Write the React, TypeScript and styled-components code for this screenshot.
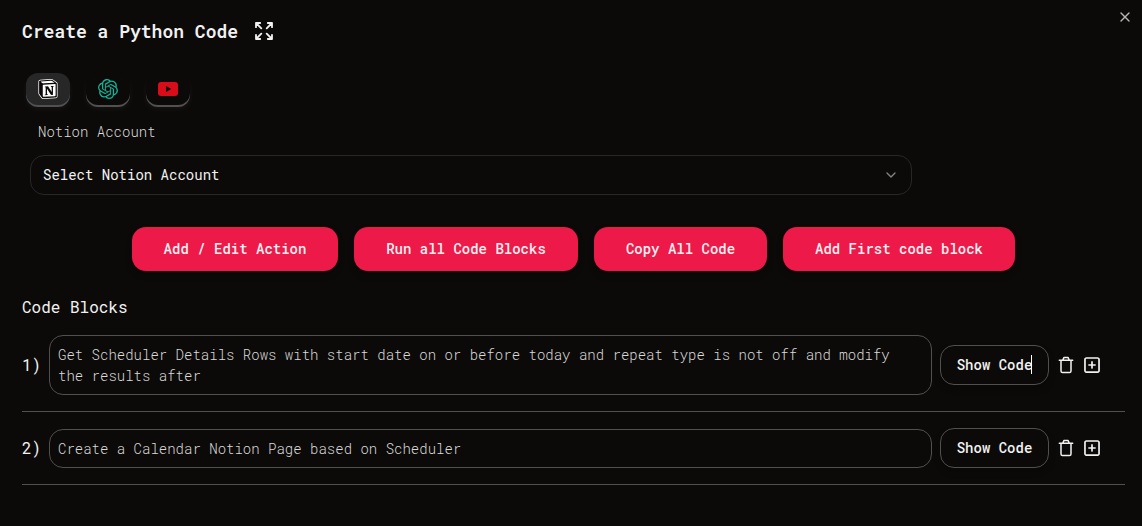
import React from "react";
import styled, { createGlobalStyle } from "styled-components";
import { ChevronDown, X } from "lucide-react";
import { FaRegSquarePlus } from "react-icons/fa6";
import { SiOpenai } from "react-icons/si";

const Global = createGlobalStyle`
  *, *::before, *::after { box-sizing: border-box; }
  body { margin: 0; background: #0c0a09; }
  button { font: inherit; color: inherit; margin: 0; }
`;

const Dialog = styled.main`
  width: 1142px;
  height: 526px;
  overflow: hidden;
  position: relative;
  padding: 18px 17px 0 22px;
  background: #0c0a09;
  color: #f2f2f2;
  font-family: "Roboto Mono", "Liberation Mono", monospace;
  font-size: 14px;
  line-height: 20px;
`;

const Close = styled.button`
  position: absolute;
  top: 9px;
  right: 9px;
  width: 16px;
  height: 16px;
  padding: 0;
  border: 0;
  background: none;
  color: #b5b4b4;
  svg { display: block; }
`;

const Header = styled.header`
  display: flex;
  align-items: center;
  gap: 17px;
  height: 27px;
  svg { margin-bottom: 1px; }
`;

const Title = styled.h1`
  margin: 0;
  font-size: 18px;
  font-weight: 600;
  line-height: 27px;
`;

const Tabs = styled.nav`
  display: flex;
  gap: 16px;
  margin: 28px 0 0 4px;
`;

const Tab = styled.button<{ $active?: boolean }>`
  display: flex;
  align-items: center;
  justify-content: center;
  width: 44px;
  height: 32px;
  margin-bottom: 2px;
  padding: 0;
  border: 0;
  border-radius: 12px;
  background: ${(p) => (p.$active ? "#272727" : "#0c0a09")};
  box-shadow: 0 2px 0 #525151, 0 4px 6px rgba(255, 255, 255, 0.05);
`;

const Label = styled.label`
  display: block;
  margin: 15px 0 0 16px;
  font-weight: 300;
  color: #dedede;
`;

const Select = styled.button`
  display: flex;
  align-items: center;
  justify-content: space-between;
  width: 882px;
  height: 40px;
  margin: 13px 0 0 8px;
  padding: 0 12px;
  border: 1px solid #292726;
  border-radius: 14px;
  background: none;
  color: #f2f2f2;
`;

const Actions = styled.div`
  display: flex;
  gap: 16px;
  margin: 32px 0 0 110px;
`;

const Action = styled.button<{ $width: number }>`
  width: ${(p) => p.$width}px;
  height: 44px;
  padding: 0;
  border: 0;
  border-radius: 14px;
  background: #ec1949;
  color: #fff1f2;
  font-weight: 500;
  box-shadow: 0 4px 6px rgba(0, 0, 0, 0.25);
`;

const SectionTitle = styled.h2`
  margin: 24px 0 0;
  font-size: 16px;
  font-weight: 400;
  line-height: 24px;
`;

const Blocks = styled.section`
  display: flex;
  flex-direction: column;
`;

const Row = styled.div<{ $first?: boolean }>`
  display: flex;
  align-items: center;
  height: ${(p) => (p.$first ? 93 : 73)}px;
  border-bottom: 1px solid #51504f;
`;

const Index = styled.span`
  width: 27px;
  font-size: 16px;
`;

const Prompt = styled.div`
  width: 883px;
  padding: 8px;
  border: 1px solid #51504f;
  border-radius: 14px;
  line-height: 21px;
  font-weight: 300;
  color: #dadada;
`;

const ShowCode = styled.button`
  width: 109px;
  height: 40px;
  margin-left: 8px;
  padding: 0;
  border: 1px solid #51504f;
  border-radius: 14px;
  background: #0c0a09;
  font-weight: 500;
  box-shadow: 0 4px 6px rgba(0, 0, 0, 0.25);
`;

const CodeText = styled.span<{ $caret?: boolean }>`
  position: relative;
  &::after {
    content: "";
    display: ${(p) => (p.$caret ? "block" : "none")};
    position: absolute;
    top: 0;
    right: 0;
    width: 1px;
    height: 19px;
    background: #fff;
  }
`;

const Tools = styled.div`
  display: flex;
  align-items: center;
  gap: 8px;
  margin-left: 8px;
  svg { display: block; }
`;

const ExpandIcon = () => (
  <svg width="18" height="18" viewBox="0 0 18 18" fill="none" stroke="#f2f2f2" strokeWidth="1.8" strokeLinecap="round" strokeLinejoin="round">
    <path d="M5.2 1H1v4.2M1 1l5.3 5.3M12.8 1H17v4.2M17 1l-5.3 5.3M5.2 17H1v-4.2M1 17l5.3-5.3M12.8 17H17v-4.2M17 17l-5.3-5.3" />
  </svg>
);

const NotionIcon = () => (
  <svg width="20" height="20" viewBox="-6 -4 108 108">
    <path
      fill="#fff"
      stroke="#fff"
      strokeWidth="8"
      d="M6.017 4.313l55.333-4.087c6.797-.583 8.543-.19 12.817 2.917l17.663 12.443c2.913 2.14 3.883 2.723 3.883 5.053v68.243c0 4.277-1.553 6.807-6.99 7.193L24.467 99.967c-4.08.193-6.023-.39-8.16-3.113L3.3 79.94C.967 76.827 0 74.497 0 71.773V11.113c0-3.497 1.553-6.413 6.017-6.8z"
    />
    <path
      fill="#0c0a09"
      d="M61.35.227L6.017 4.314C1.553 4.7 0 7.617 0 11.113v60.66c0 2.723.967 5.053 3.3 8.167l13.007 16.913c2.137 2.723 4.08 3.307 8.16 3.113l64.257-3.89c5.433-.387 6.99-2.917 6.99-7.193V20.64c0-2.21-.873-2.847-3.443-4.733L74.167 3.143C69.894.036 68.147-.357 61.35.227zM25.92 19.523c-5.247.353-6.437.433-9.417-1.99L8.927 11.507c-.77-.78-.383-1.753 1.557-1.947l53.193-3.887c4.467-.39 6.793 1.167 8.54 2.527l9.123 6.61c.39.197 1.36 1.36.193 1.36L26.6 19.476zM19.803 88.3V30.367c0-2.53.777-3.697 3.103-3.893L86 22.78c2.14-.193 3.107 1.167 3.107 3.693v57.547c0 2.53-.39 4.67-3.883 4.863l-60.377 3.5c-3.493.193-5.043-.97-5.043-4.083zm59.6-54.827c.387 1.75 0 3.5-1.75 3.7l-2.91.577v42.773c-2.527 1.36-4.853 2.137-6.797 2.137-3.107 0-3.883-.973-6.21-3.887l-19.03-29.94v28.967l6.02 1.363s0 3.5-4.857 3.5l-13.39.777c-.39-.78 0-2.723 1.357-3.11l3.497-.97v-38.3l-4.853-.393c-.39-1.75.58-4.277 3.3-4.473l14.367-.967 19.8 30.327v-26.83l-5.047-.58c-.39-2.143 1.163-3.5 3.103-3.697z"
    />
  </svg>
);

const YoutubeIcon = () => (
  <svg width="20" height="14" viewBox="0 0 20 14">
    <rect width="20" height="14" rx="3" fill="#d90d1a" />
    <path d="M8 4l5.2 3L8 10z" fill="#0c0a09" />
  </svg>
);

const TrashIcon = () => (
  <svg width="18" height="18" viewBox="0 0 18 18" fill="none" stroke="#f2f2f2" strokeWidth="1.5" strokeLinecap="round" strokeLinejoin="round">
    <path d="M2.3 4.2h13.4M5.8 4l1.1-2.4h4.2L12.2 4M4 4.4v10.5c0 .9.7 1.6 1.6 1.6h6.8c.9 0 1.6-.7 1.6-1.6V4.4" />
  </svg>
);

const blocks = [
  "Get Scheduler Details Rows with start date on or before today and repeat type is not off and modify the results after",
  "Create a Calendar Notion Page based on Scheduler",
];

const actions = [
  { label: "Add / Edit Action", width: 206 },
  { label: "Run all Code Blocks", width: 224 },
  { label: "Copy All Code", width: 173 },
  { label: "Add First code block", width: 232 },
];

export default function App() {
  return (
    <>
      <Global />
      <Dialog>
        <Close aria-label="Close"><X size={16} strokeWidth={2} /></Close>
        <Header>
          <Title>Create a Python Code</Title>
          <ExpandIcon />
        </Header>
        <Tabs>
          <Tab $active><NotionIcon /></Tab>
          <Tab><SiOpenai size={20} color="#10b59b" /></Tab>
          <Tab><YoutubeIcon /></Tab>
        </Tabs>
        <Label>Notion Account</Label>
        <Select>
          <span>Select Notion Account</span>
          <ChevronDown size={16} color="#858483" />
        </Select>
        <Actions>
          {actions.map((a) => <Action key={a.label} $width={a.width}>{a.label}</Action>)}
        </Actions>
        <SectionTitle>Code Blocks</SectionTitle>
        <Blocks>
          {blocks.map((text, i) => (
            <Row key={text} $first={i === 0}>
              <Index>{i + 1})</Index>
              <Prompt>{text}</Prompt>
              <ShowCode><CodeText $caret={i === 0}>Show Code</CodeText></ShowCode>
              <Tools>
                <TrashIcon />
                <FaRegSquarePlus size={18} color="#f2f2f2" />
              </Tools>
            </Row>
          ))}
        </Blocks>
      </Dialog>
    </>
  );
}
